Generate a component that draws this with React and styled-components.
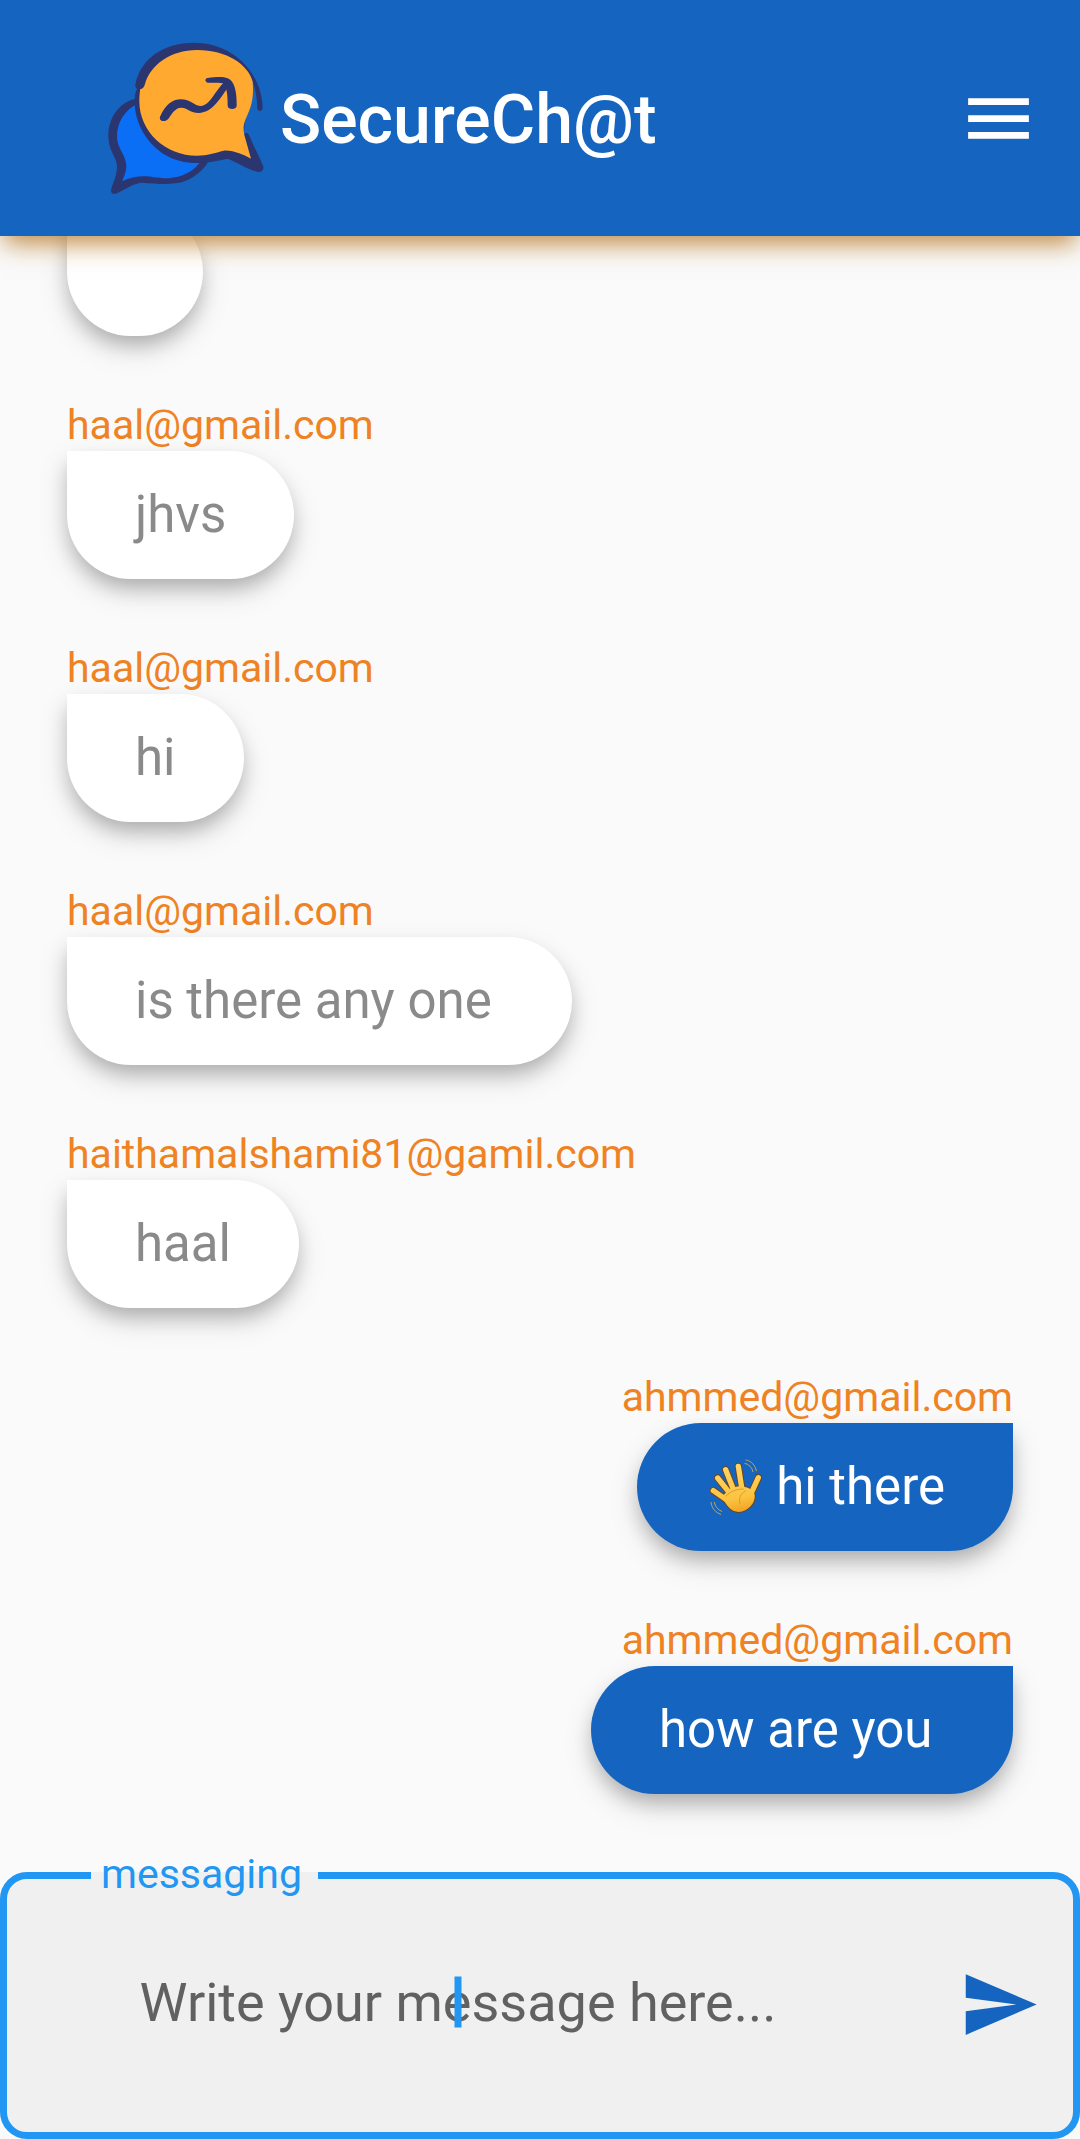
import React from "react";
import styled, { createGlobalStyle, css } from "styled-components";

const color = {
  primary: "#1565c0",
  accent: "#2196f3",
  sender: "#ef8222",
  page: "#fafafa",
  field: "#f0f0f0",
  ink: "#2b356f",
};

const GlobalStyle = createGlobalStyle`
  *, *::before, *::after { box-sizing: border-box; }
  body {
    margin: 0;
    background: ${color.page};
    font-family: Roboto, "Liberation Sans", sans-serif;
  }
`;

const Page = styled.div`
  display: flex;
  flex-direction: column;
  height: 100vh;
`;

const TopBar = styled.header`
  position: relative;
  z-index: 1;
  display: flex;
  flex: none;
  align-items: center;
  gap: 13px;
  padding: 40px 41px 40px 107px;
  background: ${color.primary};
  box-shadow: 0 11px 24px -4px rgba(174, 106, 16, 0.8);
`;

const LogoArt = styled.svg`
  flex: none;
  width: 160px;
  height: 156px;
`;

const Title = styled.h1`
  flex: 1;
  margin: 0;
  padding-top: 4px;
  color: #fff;
  font-size: 68px;
  font-weight: 500;
  line-height: 80px;
`;

const IconButton = styled.button`
  flex: none;
  display: block;
  padding: 0;
  border: 0;
  background: none;
  color: ${(p) => p.$color};
  cursor: pointer;

  svg {
    display: block;
    width: 81px;
    height: 81px;
    fill: currentColor;
  }
`;

const Conversation = styled.ul`
  display: flex;
  flex: 1;
  flex-direction: column;
  justify-content: flex-end;
  gap: 67px;
  min-height: 0;
  margin: 0;
  padding: 0 67px 58px;
  overflow: hidden;
  list-style: none;
`;

const Message = styled.li`
  display: flex;
  flex: none;
  flex-direction: column;
  align-items: ${(p) => (p.$mine ? "flex-end" : "flex-start")};
`;

const Sender = styled.span`
  padding-bottom: 3px;
  color: ${color.sender};
  font-size: 41px;
  line-height: 45px;
`;

const Bubble = styled.div`
  display: flex;
  align-items: center;
  gap: 13px;
  min-height: 128px;
  padding: 34px 68px;
  font-size: 51px;
  line-height: 60px;
  white-space: pre-wrap;
  box-shadow: 0 11px 19px -3px rgba(0, 0, 0, 0.22),
    0 13px 30px 0 rgba(0, 0, 0, 0.13);
  ${(p) =>
    p.$mine
      ? css`
          border-radius: 64px 0 64px 64px;
          background: ${color.primary};
          color: #fff;
        `
      : css`
          border-radius: 0 64px 64px 64px;
          background: #fff;
          color: #8a8a8a;
        `}
`;

const WaveArt = styled.svg`
  flex: none;
  width: 58px;
  height: 58px;
`;

const Composer = styled.form`
  flex: none;
`;

const Outline = styled.fieldset`
  min-width: 0;
  margin: 0;
  padding: 0 33px 23px 34px;
  border: 7px solid ${color.accent};
  border-radius: 27px;
  background: ${color.field};
`;

const Legend = styled.legend`
  margin-left: 50px;
  padding: 0 16px 2px 10px;
  color: ${color.accent};
  font-size: 41px;
  line-height: 45px;
`;

const FieldRow = styled.div`
  display: flex;
  align-items: center;
  gap: 84px;
  height: 210px;
`;

const Field = styled.div`
  position: relative;
  flex: 1;
  min-width: 0;
  margin-bottom: 4px;
`;

const TextInput = styled.input`
  display: block;
  width: 100%;
  height: 128px;
  padding: 0;
  border: 0;
  outline: 0;
  background: transparent;
  color: #212121;
  font: 400 54px / 64px Roboto, "Liberation Sans", sans-serif;
  text-align: center;

  &::placeholder {
    color: #616161;
    opacity: 1;
  }
`;

const Caret = styled.span`
  position: absolute;
  top: 50%;
  left: 50%;
  width: 7px;
  height: 51px;
  transform: translate(-50%, -50%);
  background: ${color.accent};
  pointer-events: none;
`;

function Logo() {
  return (
    <LogoArt viewBox="50 60 480 468" aria-hidden="true">
      <path
        fill={color.ink}
        d="M138 236C95 242 55 285 54 345C54 395 80 410 80 440C80 470 62 500 62 512C62 522 72 523 80 520C110 505 130 490 155 488C190 490 225 495 255 490C300 485 335 455 352 428Z"
      />
      <path
        fill="#0b6ff5"
        d="M134 256C100 275 80 310 80 350C80 385 108 405 108 438C108 458 98 475 96 484C125 468 165 466 190 472C225 478 290 478 328 428Z"
      />
      <path
        fill={color.ink}
        d="M136 190C150 120 215 68 312 68C425 68 515 155 517 265C516 275 502 275 501 266C500 225 492 190 478 165L460 345C460 338 472 336 476 345C490 380 510 415 519 440C521 452 512 458 500 455C470 447 435 425 412 416C390 420 350 432 300 428C200 422 132 330 133 245C133 225 136 215 140 207C134 202 134 195 136 190Z"
      />
      <path
        fill="#ffa930"
        d="M150 207Q160 207 164 192C180 135 240 90 320 90C410 90 475 135 487 185C492 240 480 265 467 295C457 318 460 330 462 345L482 416C460 405 430 390 400 392C375 398 350 407 320 407C225 407 148 335 147 245Q147 220 150 207Z"
      />
      <path
        fill={color.ink}
        d="M209 290C225 255 245 238 272 238C300 238 312 258 332 258C360 255 372 215 402 186L416 198C395 225 370 278 325 279C300 279 290 262 272 263C255 264 245 280 236 294C228 308 205 306 209 290Z"
      />
      <path
        fill={color.ink}
        d="M352 174C380 170 400 170 412 175C432 182 440 215 439 258C438 270 413 270 412 258C412 235 412 210 400 190C385 186 370 190 352 188C343 185 343 176 352 174Z"
      />
    </LogoArt>
  );
}

const FINGERS =
  "M70 149L112 178M83 111L118 155M107 86L130 145M145 76L156 145M205 110L180 165";
const PALM =
  "M100 165C112 145 140 130 165 138C182 142 192 150 194 162C196 180 185 195 172 204C155 216 133 216 119 202C108 191 102 178 96 168Z";

function WavingHand() {
  return (
    <WaveArt viewBox="45 51 174 174" role="img" aria-label="waving hand">
      <defs>
        <linearGradient
          id="skin"
          gradientUnits="userSpaceOnUse"
          x1="120"
          y1="70"
          x2="150"
          y2="215"
        >
          <stop offset="0" stopColor="#ffd567" />
          <stop offset="0.7" stopColor="#fbc440" />
          <stop offset="1" stopColor="#f2a122" />
        </linearGradient>
      </defs>
      <g fill="none" stroke="#6b4420" strokeLinecap="round">
        <path d={FINGERS} strokeWidth="22" />
        <path d={PALM} strokeWidth="6" />
      </g>
      <path
        d={FINGERS}
        fill="none"
        stroke="url(#skin)"
        strokeLinecap="round"
        strokeWidth="16"
      />
      <path d={PALM} fill="url(#skin)" />
      <g fill="none" stroke="#dd9a35" strokeWidth="3" strokeLinecap="round">
        <path d="M108 165C122 150 140 144 160 144" />
        <path d="M166 150C150 160 146 172 150 188" />
      </g>
      <g fill="none" stroke="#b5a865" strokeWidth="3" strokeLinecap="round">
        <path d="M168 57C184 60 195 72 199 89" />
        <path d="M165 67C177 70 186 79 189 92" />
        <path d="M63 184C65 202 76 214 92 220" />
        <path d="M73 184C75 196 83 206 95 211" />
      </g>
    </WaveArt>
  );
}

const messages = [
  { id: 1, text: "" },
  { id: 2, sender: "haal@gmail.com", text: "jhvs" },
  { id: 3, sender: "haal@gmail.com", text: "hi" },
  { id: 4, sender: "haal@gmail.com", text: "is there any one " },
  { id: 5, sender: "haithamalshami81@gamil.com", text: "haal" },
  { id: 6, sender: "ahmmed@gmail.com", text: "hi there", mine: true, wave: true },
  { id: 7, sender: "ahmmed@gmail.com", text: "how are you ", mine: true },
];

export default function App() {
  return (
    <>
      <GlobalStyle />
      <Page>
        <TopBar>
          <Logo />
          <Title>SecureCh@t</Title>
          <IconButton type="button" aria-label="Menu" $color="#fff">
            <svg viewBox="0 0 24 24" aria-hidden="true">
              <path d="M3 18h18v-2H3v2zm0-5h18v-2H3v2zm0-7v2h18V6H3z" />
            </svg>
          </IconButton>
        </TopBar>
        <Conversation>
          {messages.map((m) => (
            <Message key={m.id} $mine={m.mine}>
              {m.sender && <Sender>{m.sender}</Sender>}
              <Bubble $mine={m.mine}>
                {m.wave && <WavingHand />}
                {m.text && <span>{m.text}</span>}
              </Bubble>
            </Message>
          ))}
        </Conversation>
        <Composer onSubmit={(e) => e.preventDefault()}>
          <Outline>
            <Legend>
              <label htmlFor="message">messaging</label>
            </Legend>
            <FieldRow>
              <Field>
                <TextInput
                  id="message"
                  type="text"
                  autoComplete="off"
                  placeholder="Write your message here..."
                />
                <Caret />
              </Field>
              <IconButton type="submit" aria-label="Send" $color={color.primary}>
                <svg viewBox="0 0 24 24" aria-hidden="true">
                  <path d="M2 21L23 12L2 3V10L17 12L2 14Z" />
                </svg>
              </IconButton>
            </FieldRow>
          </Outline>
        </Composer>
      </Page>
    </>
  );
}
